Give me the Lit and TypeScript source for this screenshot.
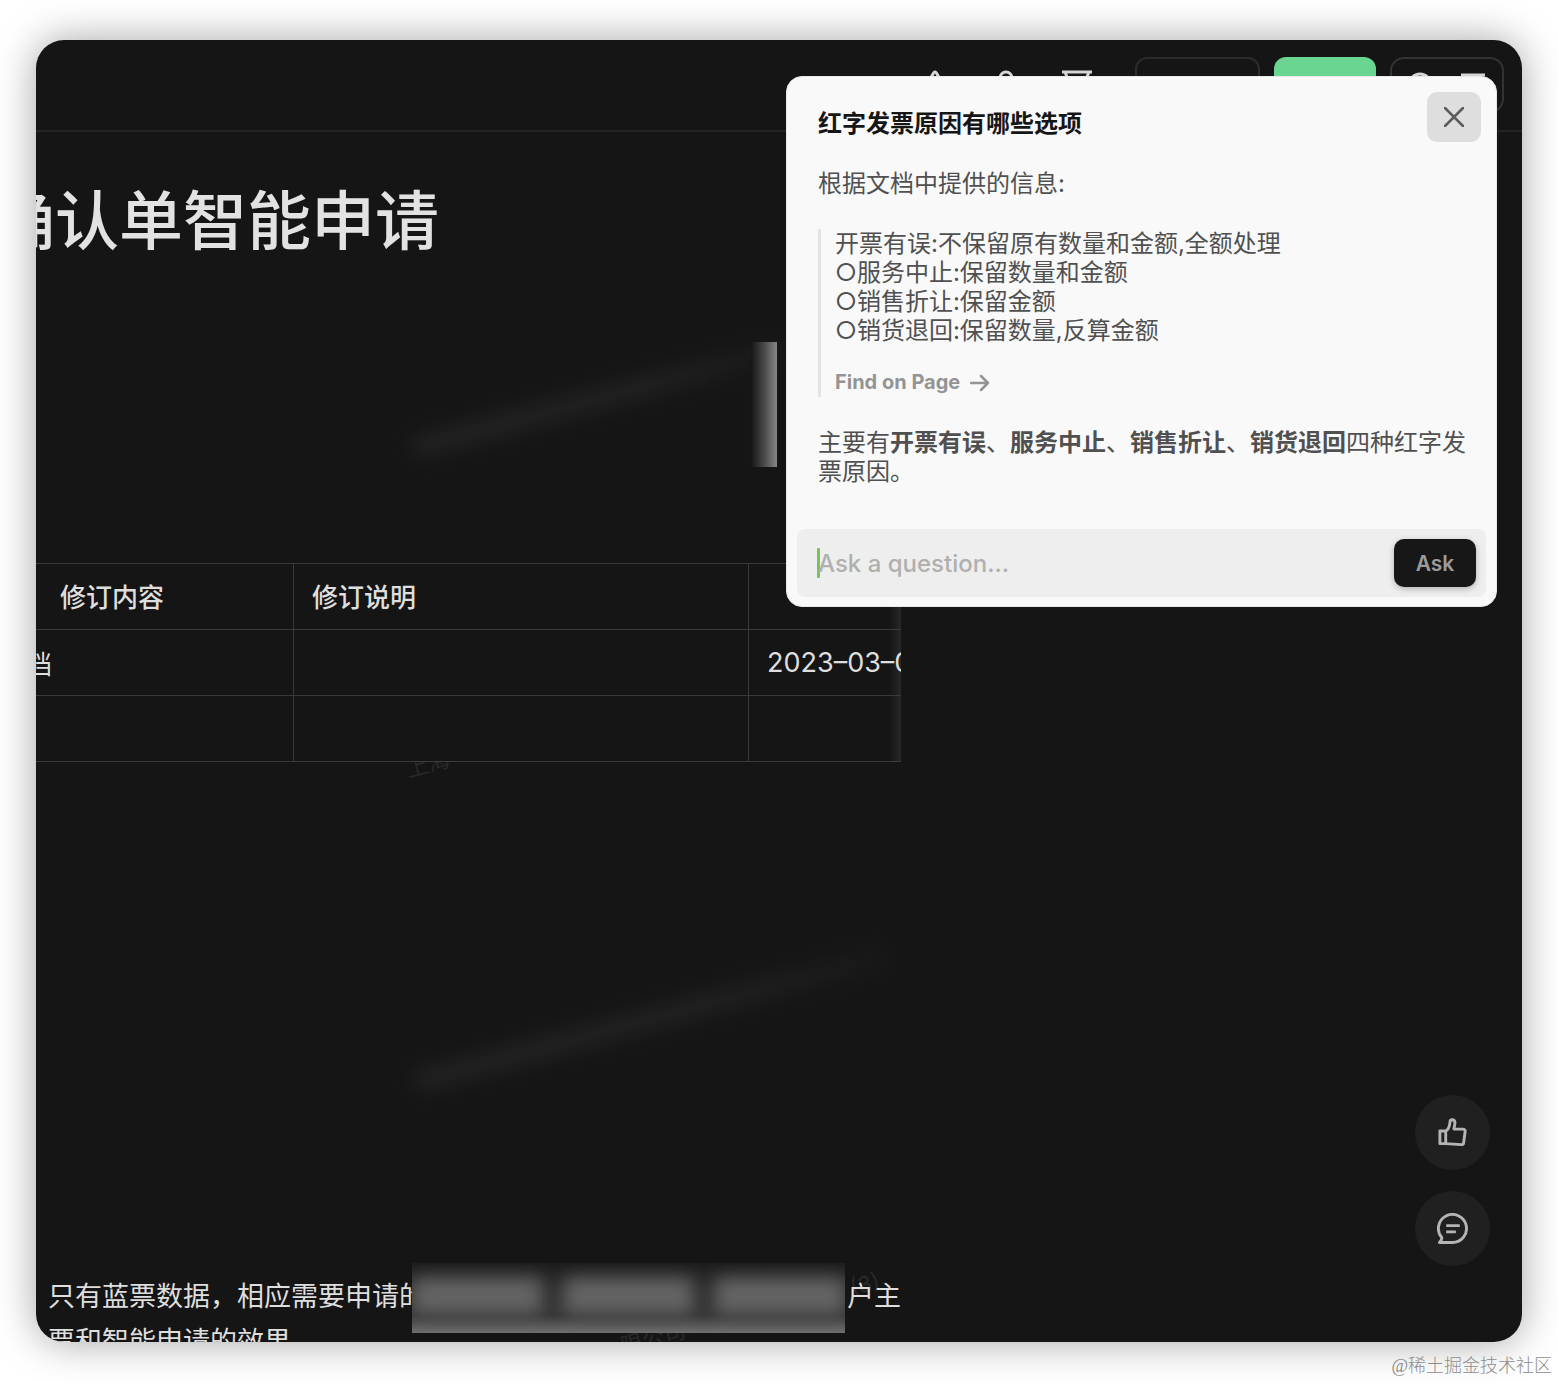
import { LitElement, html, css, svg } from "lit";
import { customElement, state } from "lit/decorators.js";

const bell = svg`<path d="M16 2v2M16 3c-2 0-3 5-5 7-3 3-3 6-3 13h16c0-7 0-10-3-13-2-2-3-7-5-7zM12 27c2 3 6 3 8 0"/>`;
const person = svg`<circle cx="16" cy="9" r="6"/><path d="M4 30c0-16 24-16 24 0z"/>`;
const tray = svg`<path d="M1 3h30M4 3l4 10v16h16V13l4-10"/>`;

@customElement("top-bar")
export class TopBar extends LitElement {
  static styles = css`
    :host {
      display: flex;
      align-items: center;
      justify-content: flex-end;
      gap: 14px;
      height: 90px;
      padding: 0 18px;
      border-bottom: 2px solid #242424;
      box-sizing: content-box;
    }
    button {
      box-sizing: border-box;
      margin: 0;
      padding: 0;
      border: 0;
      background: none;
      color: #d6d6d6;
    }
    svg {
      display: block;
      width: 32px;
      height: 32px;
      fill: none;
      stroke: currentColor;
      stroke-width: 3;
    }
    .icons {
      display: flex;
      gap: 39px;
      margin-right: 28px;
    }
    .outline {
      width: 125px;
      height: 56px;
      border: 2px solid #2c2c2c;
      border-radius: 12px;
    }
    .primary {
      width: 102px;
      height: 56px;
      border-radius: 12px;
      background: #6ad491;
    }
    .group {
      display: flex;
      align-items: center;
      justify-content: space-between;
      width: 114px;
      height: 56px;
      padding: 0 12px;
      border: 2px solid #333;
      border-radius: 14px;
    }
  `;
  render() {
    return html`
      <div class="icons">
        <button aria-label="Notifications"><svg viewBox="0 0 32 32">${bell}</svg></button>
        <button aria-label="Members"><svg viewBox="0 0 32 32">${person}</svg></button>
        <button aria-label="Archive"><svg viewBox="0 0 32 32">${tray}</svg></button>
      </div>
      <button class="outline" aria-label="Share"></button>
      <button class="primary" aria-label="Edit"></button>
      <button class="group" aria-label="Account">
        <svg viewBox="0 0 32 32"><circle cx="16" cy="16" r="11" /></svg>
        <svg viewBox="0 0 32 32"><path d="M3 6h24M3 16h24M3 26h24" /></svg>
      </button>
    `;
  }
}

@customElement("doc-page")
export class DocPage extends LitElement {
  static styles = css`
    :host {
      display: block;
      position: relative;
      isolation: isolate;
      width: 865px;
      max-width: 100%;
      overflow: hidden;
      flex: 1;
      color: #dedede;
      font-size: 27px;
    }
    h1 {
      margin: 41px 0 0 -45px;
      font-size: 64px;
      line-height: 96px;
      font-weight: 500;
      white-space: nowrap;
      color: #e2e2e2;
    }
    .cover {
      display: flex;
      justify-content: flex-end;
      margin: 73px 124px 96px 0;
    }
    .cover-edge {
      width: 26px;
      height: 125px;
      background: linear-gradient(90deg, #151515, #484848 50%, #868686);
    }
    .sheet {
      position: relative;
    }
    .sheet::after {
      content: "";
      position: absolute;
      top: 0;
      right: 0;
      bottom: 0;
      width: 12px;
      z-index: -1;
      background: linear-gradient(90deg, #151515, #282828);
    }
    table {
      width: 894px;
      margin-left: -29px;
      table-layout: fixed;
      border-collapse: collapse;
      font-size: 26px;
    }
    th,
    td {
      box-sizing: border-box;
      height: 66px;
      padding: 0 18px;
      border: 1px solid #3a3a3a;
      text-align: left;
      white-space: nowrap;
      overflow: hidden;
      font-weight: 400;
    }
    th {
      padding-bottom: 2px;
      font-weight: 500;
    }
    th:first-child {
      padding-left: 52px;
    }
    th:last-child,
    td:last-child {
      padding-right: 0;
      border-right: 0;
      text-overflow: clip;
    }
    .c1 {
      width: 286px;
    }
    .c2 {
      width: 455px;
    }
    .date {
      font-size: 27px;
    }
    .text {
      margin: 512px 0 0 12px;
      line-height: 46px;
      white-space: nowrap;
    }
    .line {
      display: grid;
      grid-template-columns: 364px 433px auto;
      column-gap: 0;
      height: 45px;
    }
    .clip {
      overflow: hidden;
    }
    .tail {
      padding-left: 2px;
    }
    .redacted {
      display: flex;
      gap: 22px;
      box-sizing: border-box;
      height: 70px;
      margin-top: -11px;
      padding: 15px 0 19px;
      position: relative;
      z-index: 1;
      overflow: hidden;
      background: linear-gradient(180deg, #1c1c1c, #2a2a2a 30%, #363636 75%, #707070);
    }
    .redacted i {
      flex: 1;
      background: #646464;
      filter: blur(9px);
    }
    .smear {
      position: absolute;
      z-index: -1;
      left: 370px;
      height: 24px;
      width: 390px;
      border-radius: 12px;
      background: linear-gradient(90deg, #212121, #202020 60%, #181818);
      filter: blur(9px);
      transform: rotate(-15deg);
    }
    .smear-a {
      top: 254px;
    }
    .smear-b {
      top: 875px;
      width: 490px;
    }
    .ghost {
      position: absolute;
      z-index: -1;
      color: #292929;
      font-size: 22px;
      line-height: 24px;
      height: 24px;
    }
    .ghost span {
      display: block;
      transform: rotate(-15deg);
    }
    .ghost-a {
      left: 370px;
      top: 630px;
      height: 22px;
      overflow: hidden;
    }
    .ghost-a span {
      margin-top: -10px;
    }
    .ghost-b {
      left: 814px;
      top: 1140px;
    }
    .ghost-c {
      left: 584px;
      top: 1194px;
    }
  `;
  render() {
    return html`
      <div class="smear smear-a"></div>
      <div class="smear smear-b"></div>
      <div class="ghost ghost-a" aria-hidden="true"><span>上海</span></div>
      <div class="ghost ghost-b" aria-hidden="true"><span>(3)</span></div>
      <div class="ghost ghost-c" aria-hidden="true"><span>限公司</span></div>
      <h1>确认单智能申请</h1>
      <div class="cover"><div class="cover-edge"></div></div>
      <div class="sheet">
        <table>
          <colgroup>
            <col class="c1" />
            <col class="c2" />
            <col />
          </colgroup>
          <thead>
            <tr><th>修订内容</th><th>修订说明</th><th></th></tr>
          </thead>
          <tbody>
            <tr><td>档</td><td></td><td class="date">2023–03–0</td></tr>
            <tr><td></td><td></td><td></td></tr>
          </tbody>
        </table>
      </div>
      <div class="text">
        <div class="line">
          <span class="clip">只有蓝票数据，相应需要申请的</span>
          <span class="redacted"><i></i><i></i><i></i></span>
          <span class="tail">户主</span>
        </div>
        <div>票和智能申请的效果</div>
      </div>
    `;
  }
}

@customElement("answer-card")
export class AnswerCard extends LitElement {
  @state() question = "";

  static styles = css`
    :host {
      display: block;
      box-sizing: border-box;
      padding: 32px 10px 9px;
      border-radius: 16px;
      background: #f9f9f9;
      border: 1px solid #e8e8e8;
      color: #505050;
      font-size: 24px;
      line-height: 29px;
    }
    button,
    input {
      font-family: inherit;
    }
    .body {
      display: flex;
      flex-direction: column;
      align-items: flex-start;
      gap: 31px;
      padding: 0 8px 0 21px;
    }
    h2,
    p,
    blockquote {
      margin: 0;
    }
    h2 {
      font-size: 24px;
      line-height: 29px;
      font-weight: 700;
      color: #161616;
    }
    b {
      font-weight: 700;
    }
    blockquote {
      padding-left: 14px;
      border-left: 3px solid #e3e3e3;
    }
    .find {
      display: flex;
      align-items: center;
      gap: 10px;
      margin-top: 23px;
      color: #949494;
      font-size: 20px;
      font-weight: 700;
      text-decoration: none;
    }
    .find svg {
      width: 20px;
      height: 18px;
      fill: none;
      stroke: currentColor;
      stroke-width: 2.500;
      stroke-linecap: round;
      stroke-linejoin: round;
    }
    .close {
      position: absolute;
      top: 15px;
      right: 15px;
      display: grid;
      place-items: center;
      width: 54px;
      height: 50px;
      padding: 0;
      border: 0;
      border-radius: 10px;
      background: #dedede;
    }
    .close svg {
      width: 20px;
      height: 20px;
      stroke: #5c5c5c;
      stroke-width: 2.500;
      stroke-linecap: round;
    }
    form {
      display: flex;
      align-items: center;
      gap: 12px;
      margin-top: 43px;
      padding: 10px 10px 10px 20px;
      border-radius: 8px;
      background: #eee;
    }
    .caret {
      width: 3px;
      height: 30px;
      margin-right: -14px;
      border-radius: 1px;
      background: #7cc25c;
    }
    input {
      flex: 1;
      min-width: 0;
      height: 48px;
      padding: 0;
      border: 0;
      outline: 0;
      background: none;
      color: #333;
      font-size: 24px;
      font-weight: 500;
    }
    input::placeholder {
      color: #b0b0b0;
      opacity: 1;
    }
    .ask {
      width: 82px;
      height: 48px;
      padding: 0;
      border: 0;
      border-radius: 10px;
      background: #171717;
      color: #9b9b9b;
      font-size: 21px;
      font-weight: 600;
      box-shadow: 0 2px 6px rgba(0, 0, 0, 0.25);
    }
  `;
  render() {
    return html`
      <button class="close" aria-label="Close">
        <svg viewBox="0 0 20 20"><path d="M1 1l18 18M19 1L1 19" /></svg>
      </button>
      <div class="body">
        <h2>红字发票原因有哪些选项</h2>
        <p>根据文档中提供的信息:</p>
        <blockquote>
          开票有误:不保留原有数量和金额,全额处理<br />
          ○服务中止:保留数量和金额<br />
          ○销售折让:保留金额<br />
          ○销货退回:保留数量,反算金额
          <a class="find" href="#page">
            Find on Page
            <svg viewBox="0 0 20 18"><path d="M1 9h17M11 2l7 7-7 7" /></svg>
          </a>
        </blockquote>
        <p>
          主要有<b>开票有误</b>、<b>服务中止</b>、<b>销售折让</b>、<b>销货退回</b>四种红字发票原因。
        </p>
      </div>
      <form @submit=${(e: Event) => e.preventDefault()}>
        <span class="caret"></span>
        <input
          type="text"
          aria-label="Ask a question"
          placeholder="Ask a question..."
          .value=${this.question}
          @input=${(e: Event) => (this.question = (e.target as HTMLInputElement).value)}
        />
        <button class="ask" type="submit">Ask</button>
      </form>
    `;
  }
}

@customElement("app-root")
export class AppRoot extends LitElement {
  static styles = css`
    :host {
      display: block;
      position: relative;
      box-sizing: border-box;
      height: 100vh;
      padding: 40px 36px;
      overflow: hidden;
      background: #fff;
      font-family: Inter, "Noto Sans CJK SC", sans-serif;
    }
    .window {
      position: relative;
      display: flex;
      flex-direction: column;
      height: 100%;
      overflow: hidden;
      border-radius: 28px;
      background: #151515;
    }
    .shade {
      height: 100%;
      border-radius: 28px;
      box-shadow: 0 0 40px rgba(0, 0, 0, 0.36);
    }
    answer-card {
      position: absolute;
      top: 36px;
      right: 25px;
      width: 711px;
      max-width: 90%;
    }
    .fabs {
      position: absolute;
      right: 32px;
      bottom: 76px;
      display: grid;
      gap: 21px;
    }
    .fab {
      display: grid;
      place-items: center;
      width: 75px;
      height: 75px;
      padding: 0;
      border: 0;
      border-radius: 50%;
      background: #202020;
    }
    .fab svg {
      width: 31px;
      height: 31px;
      fill: none;
      stroke: #b5b5b5;
      stroke-width: 3;
      stroke-linejoin: round;
    }
    .credit {
      position: absolute;
      right: 6px;
      bottom: 4px;
      color: #8c8c8c;
      font-family: "Liberation Serif", "Noto Sans CJK SC", serif;
      font-size: 18px;
      font-weight: 300;
      line-height: 24px;
    }
  `;
  render() {
    return html`
      <div class="shade" lang="zh-CN">
        <main class="window">
          <top-bar></top-bar>
          <doc-page></doc-page>
          <div class="fabs">
            <button class="fab" aria-label="Like">
              <svg viewBox="0 0 32 32">
                <path d="M3 14.500h6v13H3zM9 14.500c4-2 4-6 4.500-10 .5-2.500 5-2.500 5 1.500 0 3-1 4-1 6.500h9c2 0 3 1 2.500 3l-1.500 11c0 1.500-1 2-2.500 2L9 27.500" />
              </svg>
            </button>
            <button class="fab" aria-label="Comments">
              <svg viewBox="0 0 32 32">
                <path d="M16 30.500H2.500c1-1 2.500-3 2.500-5A14.500 14.500 0 1 1 16 30.500zM9.500 13h14M9.500 19.500h10" />
              </svg>
            </button>
          </div>
          <answer-card></answer-card>
        </main>
      </div>
      <div class="credit" lang="zh-CN">@稀土掘金技术社区</div>
    `;
  }
}
